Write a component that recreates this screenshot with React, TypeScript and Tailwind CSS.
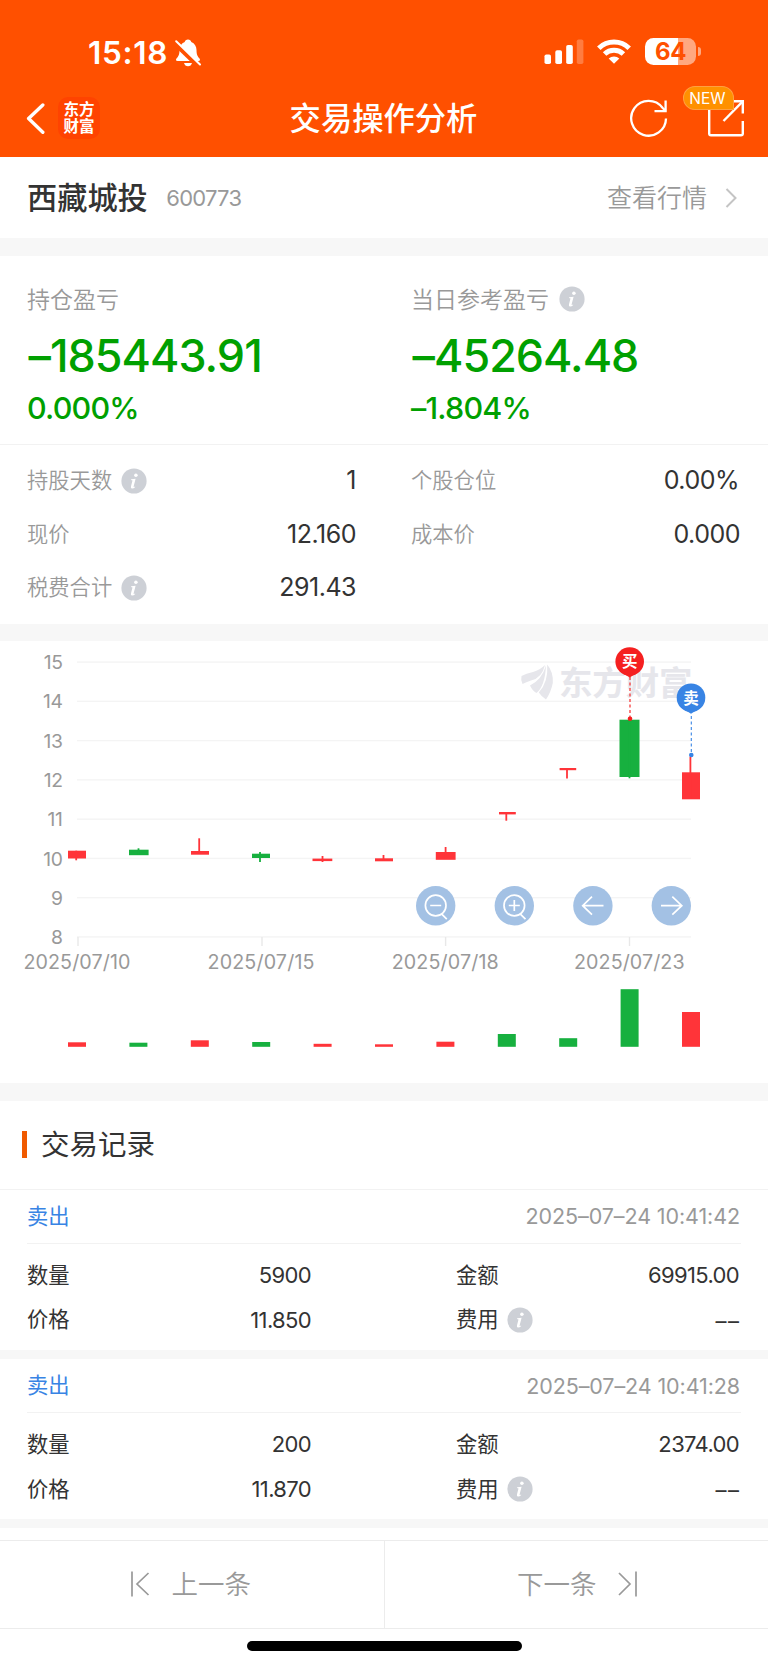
import React from "react";

const RED = "#ff3439";
const GREEN = "#17b03f";

type Candle = {
  x: number;
  w: number;
  top: number;
  bottom: number;
  wickX: number;
  high: number;
  low: number;
  volTop: number;
  color: string;
  volColor: string;
};

const candles: Candle[] = [
  { x: 68, w: 18, top: 209.7, bottom: 217.5, wickX: 76.2, high: 209.7, low: 219.3, volTop: 401.3, color: RED, volColor: RED },
  { x: 129, w: 19.6, top: 208.7, bottom: 214.2, wickX: 138.5, high: 207.3, low: 214, volTop: 401.7, color: GREEN, volColor: GREEN },
  { x: 191, w: 18, top: 210, bottom: 213.7, wickX: 199.2, high: 197.3, low: 213, volTop: 399.3, color: RED, volColor: RED },
  { x: 252, w: 18, top: 212.7, bottom: 217, wickX: 260, high: 211, low: 221, volTop: 401, color: GREEN, volColor: GREEN },
  { x: 312.5, w: 19.8, top: 217.6, bottom: 220.1, wickX: 322.5, high: 215, low: 221, volTop: 402.8, color: RED, volColor: RED },
  { x: 375, w: 18, top: 217.3, bottom: 220.3, wickX: 383.5, high: 214, low: 220, volTop: 403.3, color: RED, volColor: RED },
  { x: 435.8, w: 19.8, top: 211, bottom: 218.8, wickX: 445.6, high: 206, low: 218, volTop: 400.7, color: RED, volColor: RED },
  { x: 499, w: 16.8, top: 171, bottom: 173.4, wickX: 506.3, high: 172, low: 179.7, volTop: 393, color: RED, volColor: GREEN },
  { x: 559.6, w: 16.6, top: 127, bottom: 129.2, wickX: 567, high: 128, low: 137.5, volTop: 397.2, color: RED, volColor: GREEN },
  { x: 619.5, w: 20, top: 78.7, bottom: 136, wickX: 629.5, high: 79, low: 137.3, volTop: 348.2, color: GREEN, volColor: GREEN },
  { x: 682, w: 18, top: 131.3, bottom: 158.3, wickX: 690.4, high: 115.7, low: 158, volTop: 371, color: RED, volColor: RED },
];

const dates = [
  { x: 78, cx: 76.9, label: "2025/07/10", w: 107 },
  { x: 262, cx: 261, label: "2025/07/15", w: 107 },
  { x: 445.6, cx: 445.2, label: "2025/07/18", w: 107 },
  { x: 629.5, cx: 629.3, label: "2025/07/23", w: 110.5 },
];

function Info({ className = "" }: { className?: string }) {
  return (
    <svg viewBox="0 0 26 26" className={"size-[26px] shrink-0 " + className}>
      <circle cx="13" cy="13" r="12.6" fill="#cdd0d6" />
      <circle cx="14.9" cy="7.2" r="1.75" fill="#fff" />
      <path d="M10.2 11.3 L14.6 10.7 L12.6 18.6 Q12.5 19.4 13.9 18.4 L14.3 18.9 Q12.3 20.9 10.7 20.5 Q9.5 20.1 10 18.3 L11.5 12.5 L10 12 Z" fill="#fff" />
    </svg>
  );
}

function StatusBar() {
  return (
    <div className="flex h-[105px] items-start pt-[38px] pl-[87px] pr-[67px]">
      <span className="w-[80px] whitespace-nowrap pl-[1px] text-[31.5px] leading-[30px] font-semibold tracking-[0.7px] text-white">15:18</span>
      <svg viewBox="0 0 26 28" className="ml-[8px] mt-px h-[28px] w-[26px]">
        <path d="M13 .5c1.8 0 3 1.2 3.3 2.4 3.4 1.4 5.2 4.3 5.2 8.2 0 4.6 1.1 6.4 3 8.4.9 1 .6 2.6-1 2.6H2.5c-1.6 0-1.9-1.6-1-2.6 1.9-2 3-3.8 3-8.4 0-3.9 1.8-6.8 5.2-8.2C10 1.7 11.2.5 13 .5z" fill="#fff" />
        <path d="M9 24h8c-.5 2-2 3.3-4 3.3S9.500 26 9 24z" fill="#fff" />
        <path d="M0 4.2 24 27.5" stroke="#ff5000" strokeWidth="5" />
        <path d="M1.2 2.2 25 25.5" stroke="#fff" strokeWidth="2" strokeLinecap="round" />
      </svg>
      <svg viewBox="0 0 40 26" className="ml-auto mt-px h-[26px] w-[40px]">
        <rect x="0.5" y="15.5" width="6.5" height="9.5" rx="1.8" fill="#fff" />
        <rect x="11.3" y="11.2" width="6.7" height="13.8" rx="1.8" fill="#fff" />
        <rect x="22.2" y="6" width="6.6" height="19" rx="1.8" fill="#fff" />
        <rect x="32.8" y="0.5" width="6.6" height="24.5" rx="1.8" fill="#fff" opacity="0.25" />
      </svg>
      <svg viewBox="0 0 36 26" className="ml-[12px] mt-px h-[26px] w-[36px]">
        <g fill="none" stroke="#fff" strokeWidth="5">
          <path d="M2.8 9.2a21.8 21.8 0 0 1 30.4 0" />
          <path d="M8.6 15a13.6 13.6 0 0 1 18.8 0" />
        </g>
        <path d="M18 24.8 12.7 19.6a7.5 7.5 0 0 1 10.6 0z" fill="#fff" />
      </svg>
      <div className="ml-[13px] flex h-[27px] items-center">
        <div className="flex h-[27px] w-[51px] items-center justify-center rounded-[8.5px] bg-[linear-gradient(90deg,#fff_0_64%,#ffa880_64%_100%)]">
          <span className="text-[24px] leading-[27px] font-bold tracking-[-0.3px] text-[#ff5000]">64</span>
        </div>
        <div className="ml-[1.5px] h-[9px] w-[3.5px] rounded-r-full bg-[#ffa880]" />
      </div>
    </div>
  );
}

function NavBar() {
  return (
    <div className="relative flex h-[52px] items-start justify-center">
      <div className="absolute left-[26px] top-[-8px] flex items-center">
        <svg viewBox="0 0 20 32" className="h-[32px] w-[20px]">
          <path d="M16.8 3 2.6 16.6 16.8 30.200" fill="none" stroke="#fff" strokeWidth="3.4" strokeLinecap="round" strokeLinejoin="round" />
        </svg>
        <div className="ml-[12px] flex size-[42px] flex-col items-center justify-center rounded-[10px] bg-[#ff4300] text-[15.5px] leading-[17.5px] font-bold text-white">
          <span className="h-[17.5px]">东方</span>
          <span className="h-[17.5px]">财富</span>
        </div>
      </div>
      <h1 className="mt-[-8px] pr-[1px] text-[31.3px] leading-[44px] font-medium text-white">交易操作分析</h1>
      <svg viewBox="0 0 40 40" className="absolute left-[628.5px] top-[-7px] size-[40px]">
        <g fill="none" stroke="#fff" strokeWidth="2.3">
          <path d="M37 20.5A17.4 17.4 0 1 1 33.5 9.8L36.7 12.8" />
          <path d="M36.6 2.5V13.2H25.5" />
        </g>
      </svg>
      <svg viewBox="0 0 38 38" className="absolute left-[707px] top-[-6px] size-[38px]">
        <g fill="none" stroke="#fff" strokeWidth="2.4">
          <path d="M2.2 8V34.5Q2.2 36.3 4 36.3H34Q35.8 36.3 35.8 34.5V22" strokeLinejoin="round" />
          <path d="M24 2.3H35.8V14.5" />
          <path d="M35.5 2.6 16.5 22" />
        </g>
      </svg>
      <div className="absolute left-[683px] top-[-19px] flex h-[24px] w-[51px] items-center justify-center rounded-full rounded-br-[3px] border border-[#ffa040] bg-[#ff9100] pr-[2px] pt-[1px] text-[15.5px] text-white">
        NEW
      </div>
    </div>
  );
}

function Metric({ label, value, pct, info }: { label: string; value: string; pct: string; info?: boolean }) {
  return (
    <div className="flex w-[384px] shrink-0 flex-col">
      <div className="flex h-[28px] items-center text-[23px] font-[350] text-[#999]">
        <span className="pt-[2px]">{label}</span>
        {info && <Info className="ml-[10px]" />}
      </div>
      <div className="mt-[19px] h-[48px] pl-[1.5px] text-[44.8px] leading-[48px] font-[550] tracking-[-0.95px] text-[#00a000]">{value}</div>
      <div className="mt-[12px] h-[32px] text-[30.5px] leading-[32px] font-medium tracking-[-0.8px] text-[#00a000]">{pct}</div>
    </div>
  );
}

function Stat({ label, value, info, className }: { label: string; value: string; info?: boolean; className: string }) {
  return (
    <div className={"flex h-[53.5px] items-center " + className}>
      <span className="pt-[1px] text-[21.3px] font-[350] text-[#999]">{label}</span>
      {info && <Info className="ml-[9px]" />}
      <span className="ml-auto pt-[0.5px] text-[25px] font-[380] tracking-[-0.5px] text-[#333]">{value}</span>
    </div>
  );
}

function PinShape({ cx, cy, fill, char }: { cx: number; cy: number; fill: string; char: string }) {
  return (
    <g>
      <circle cx={cx} cy={cy} r={14.3} fill={fill} />
      <path d={`M${cx - 9.5} ${cy + 10} L${cx} ${cy + 16} L${cx + 9.5} ${cy + 10} Z`} fill={fill} />
      <text x={cx} y={cy + 5.8} textAnchor="middle" fontSize="15.5" fontWeight="700" fill="#fff">{char}</text>
    </g>
  );
}

function Chart() {
  return (
    <svg viewBox="0 0 768 442" className="block h-[442px] w-[768px]">
      {[15, 14, 13, 12, 11, 10, 9, 8].map((v, i) => (
        <g key={v}>
          <rect x="77" y={20.4 + i * 39.26} width="614" height="1.4" fill="#f4f4f4" />
          <text x="62.5" y={28.2 + i * 39.26} textAnchor="end" fontSize="19.3" letterSpacing="-0.4" fill="#999">{v}</text>
        </g>
      ))}
      {dates.map((d) => (
        <g key={d.label}>
          <rect x={d.x - 0.7} y="296" width="1.4" height="9" fill="#e8e8e8" />
          <text x={d.cx} y="328.2" textAnchor="middle" fontSize="19.7" textLength={d.w} fill="#999">{d.label}</text>
        </g>
      ))}
      <g fill="#e6e6eb">
        <path d="M521.5 35Q526 32.500 533 31Q540 29 545 24Q542 37 531 39.5Q526 41 522.5 43Q520.5 39 521.5 35Z" />
        <path d="M546 24.5Q545 45 536.5 52Q532.5 50 530 44.5Q542 38.5 546 24.5Z" />
        <path d="M547.2 23.5Q553.5 31 552.8 42Q551 51 546 58.5Q541 55 538.8 51.5Q548.5 41 547.2 23.5Z" />
        <text x="559" y="53.5" fontSize="33.5" fontWeight="700" textLength="133.5">东方财富</text>
      </g>
      {candles.map((c, i) => (
        <g key={c.x}>
          <rect x={c.x} y={c.top} width={c.w} height={c.bottom - c.top} fill={c.color} />
          <rect x={c.wickX - 0.9} y={c.high} width="1.8" height={c.low - c.high} fill={c.color} />
          <rect x={68 + i * 61.4} y={c.volTop} width="18" height={405.8 - c.volTop} fill={c.volColor} />
        </g>
      ))}
      <path d="M630 36V76" stroke="#f52c2c" strokeWidth="1.2" strokeDasharray="3 2.5" />
      <circle cx="630" cy="77.7" r="2.3" fill="#f52020" />
      <path d="M691.3 75V112" stroke="#3884e4" strokeWidth="1.1" strokeDasharray="3 2.5" />
      <circle cx="691.3" cy="114" r="2.3" fill="#3884e4" />
      <PinShape cx={629.7} cy={20.5} fill="#f52020" char="买" />
      <PinShape cx={691} cy={56.7} fill="#3884e4" char="卖" />
      {[435.7, 514.3, 592.9, 671.3].map((x) => (
        <circle key={x} cx={x} cy="264.7" r="19.7" fill="#a3c1e4" />
      ))}
      <g fill="none" stroke="#fff" strokeWidth="1.7">
        <circle cx="435.7" cy="264.5" r="10.3" />
        <path d="M430.2 264.5H441.2M441.5 272.8L446.8 278.2" />
        <circle cx="514.3" cy="264.5" r="10.3" />
        <path d="M508.8 264.5H519.8M514.3 259V270M520.1 272.8L525.5 278.2" />
        <path d="M603.5 264.7H582.5M592 255.7L582.7 264.7L592 273.7" />
        <path d="M661 264.7H682M672.3 255.7L681.8 264.7L672.3 273.7" />
      </g>
    </svg>
  );
}

function Field({ label, value }: { label: string; value: string }) {
  return (
    <div className="flex h-[44.5px] items-center">
      <span className="pt-[1px]">{label}</span>
      <span className="ml-auto pt-[0.5px] text-[22px] tracking-[-0.65px]">{value}</span>
    </div>
  );
}

function Trade({ time, qty, amount, price }: { time: string; qty: string; amount: string; price: string }) {
  return (
    <div className="h-[169.3px] border-b-[9px] border-[#f7f7f7] px-[27px]">
      <div className="flex h-[54px] items-center justify-between border-b border-[#f2f2f2] pr-[1px]">
        <span className="pt-[2px] text-[21.3px] font-[380] text-[#3884e4]">卖出</span>
        <span className="pt-[1px] text-[21.5px] font-[380] tracking-[-0.1px] text-[#999]">{time}</span>
      </div>
      <div className="flex pt-[9.5px] text-[21.3px] font-[380] text-[#333]">
        <div className="w-[284px]">
          <Field label="数量" value={qty} />
          <Field label="价格" value={price} />
        </div>
        <div className="ml-[145px] flex-1 pr-[2px]">
          <Field label="金额" value={amount} />
          <div className="flex h-[44.5px] items-center">
            <span className="pt-[1px]">费用</span>
            <Info className="ml-[8px]" />
            <span className="ml-auto flex gap-[1.5px] pt-[3px] text-[22px]"><span>–</span><span>–</span></span>
          </div>
        </div>
      </div>
    </div>
  );
}

export default function App() {
  return (
    <div className="flex h-[1665px] w-[768px] flex-col overflow-hidden bg-white font-['Inter','Noto_Sans_CJK_SC',sans-serif]">
      <header className="h-[157px] shrink-0 bg-[#ff5000]">
        <StatusBar />
        <NavBar />
      </header>
      <section className="flex h-[81px] shrink-0 items-center pl-[27px] pr-[31px]">
        <h2 className="pt-[2px] text-[30.2px] font-medium text-[#333]">西藏城投</h2>
        <span className="ml-[18.5px] pt-[1px] text-[22px] font-[380] tracking-[-0.75px] text-[#999]">600773</span>
        <span className="ml-auto pt-[2px] text-[25px] font-[350] text-[#999]">查看行情</span>
        <svg viewBox="0 0 12 20" className="ml-[18px] h-[20px] w-[12px]">
          <path d="M1.5 1 10.5 10 1.5 19" fill="none" stroke="#c4c4c4" strokeWidth="2" />
        </svg>
      </section>
      <div className="h-[18px] shrink-0 bg-[#f7f7f7]" />
      <section className="h-[367.5px] shrink-0">
        <div className="flex h-[188.5px] border-b border-[#f2f2f2] pl-[27px] pt-[29px]">
          <Metric label="持仓盈亏" value="–185443.91" pct="0.000%" />
          <Metric label="当日参考盈亏" value="–45264.48" pct="–1.804%" info />
        </div>
        <div className="grid grid-cols-[384px_384px] pt-[9.5px]">
          <Stat label="持股天数" value="1" info className="pl-[27px] pr-[28px]" />
          <Stat label="个股仓位" value="0.00%" className="pl-[27px] pr-[29px]" />
          <Stat label="现价" value="12.160" className="pl-[27px] pr-[28px]" />
          <Stat label="成本价" value="0.000" className="pl-[27px] pr-[28px]" />
          <Stat label="税费合计" value="291.43" info className="pl-[27px] pr-[28px]" />
        </div>
      </section>
      <div className="h-[17.5px] shrink-0 bg-[#f7f7f7]" />
      <section className="h-[442px] shrink-0">
        <Chart />
      </section>
      <div className="h-[17.5px] shrink-0 bg-[#f7f7f7]" />
      <section className="flex h-[89px] shrink-0 items-center border-b border-[#f2f2f2] pl-[21.5px]">
        <div className="h-[27px] w-[5.5px] bg-[#f05a00]" />
        <h3 className="ml-[14px] pt-[2px] text-[28.5px] font-[380] text-[#333]">交易记录</h3>
      </section>
      <section className="h-[350px] shrink-0">
        <Trade time="2025–07–24 10:41:42" qty="5900" amount="69915.00" price="11.850" />
        <Trade time="2025–07–24 10:41:28" qty="200" amount="2374.00" price="11.870" />
      </section>
      <nav className="flex h-[89px] shrink-0 border-y border-[#ececec] text-[26.5px] font-[350] text-[#999]">
        <div className="flex w-[385px] items-center border-r border-[#ececec] pl-[130px]">
          <svg viewBox="0 0 20 26" className="h-[26px] w-[20px]">
            <path d="M2 .5V25.5M18.5 2 7 13 18.5 24" fill="none" stroke="#999" strokeWidth="1.7" />
          </svg>
          <span className="ml-[21.5px] pt-[2px]">上一条</span>
        </div>
        <div className="flex w-[383px] items-center pl-[132px]">
          <span className="pt-[2px]">下一条</span>
          <svg viewBox="0 0 20 26" className="ml-[21.5px] h-[26px] w-[20px]">
            <path d="M18 .5V25.5M1 2 12 13 1 24" fill="none" stroke="#999" strokeWidth="1.7" />
          </svg>
        </div>
      </nav>
      <div className="mx-auto mt-[12px] h-[10px] w-[275px] shrink-0 rounded-full bg-black" />
    </div>
  );
}
